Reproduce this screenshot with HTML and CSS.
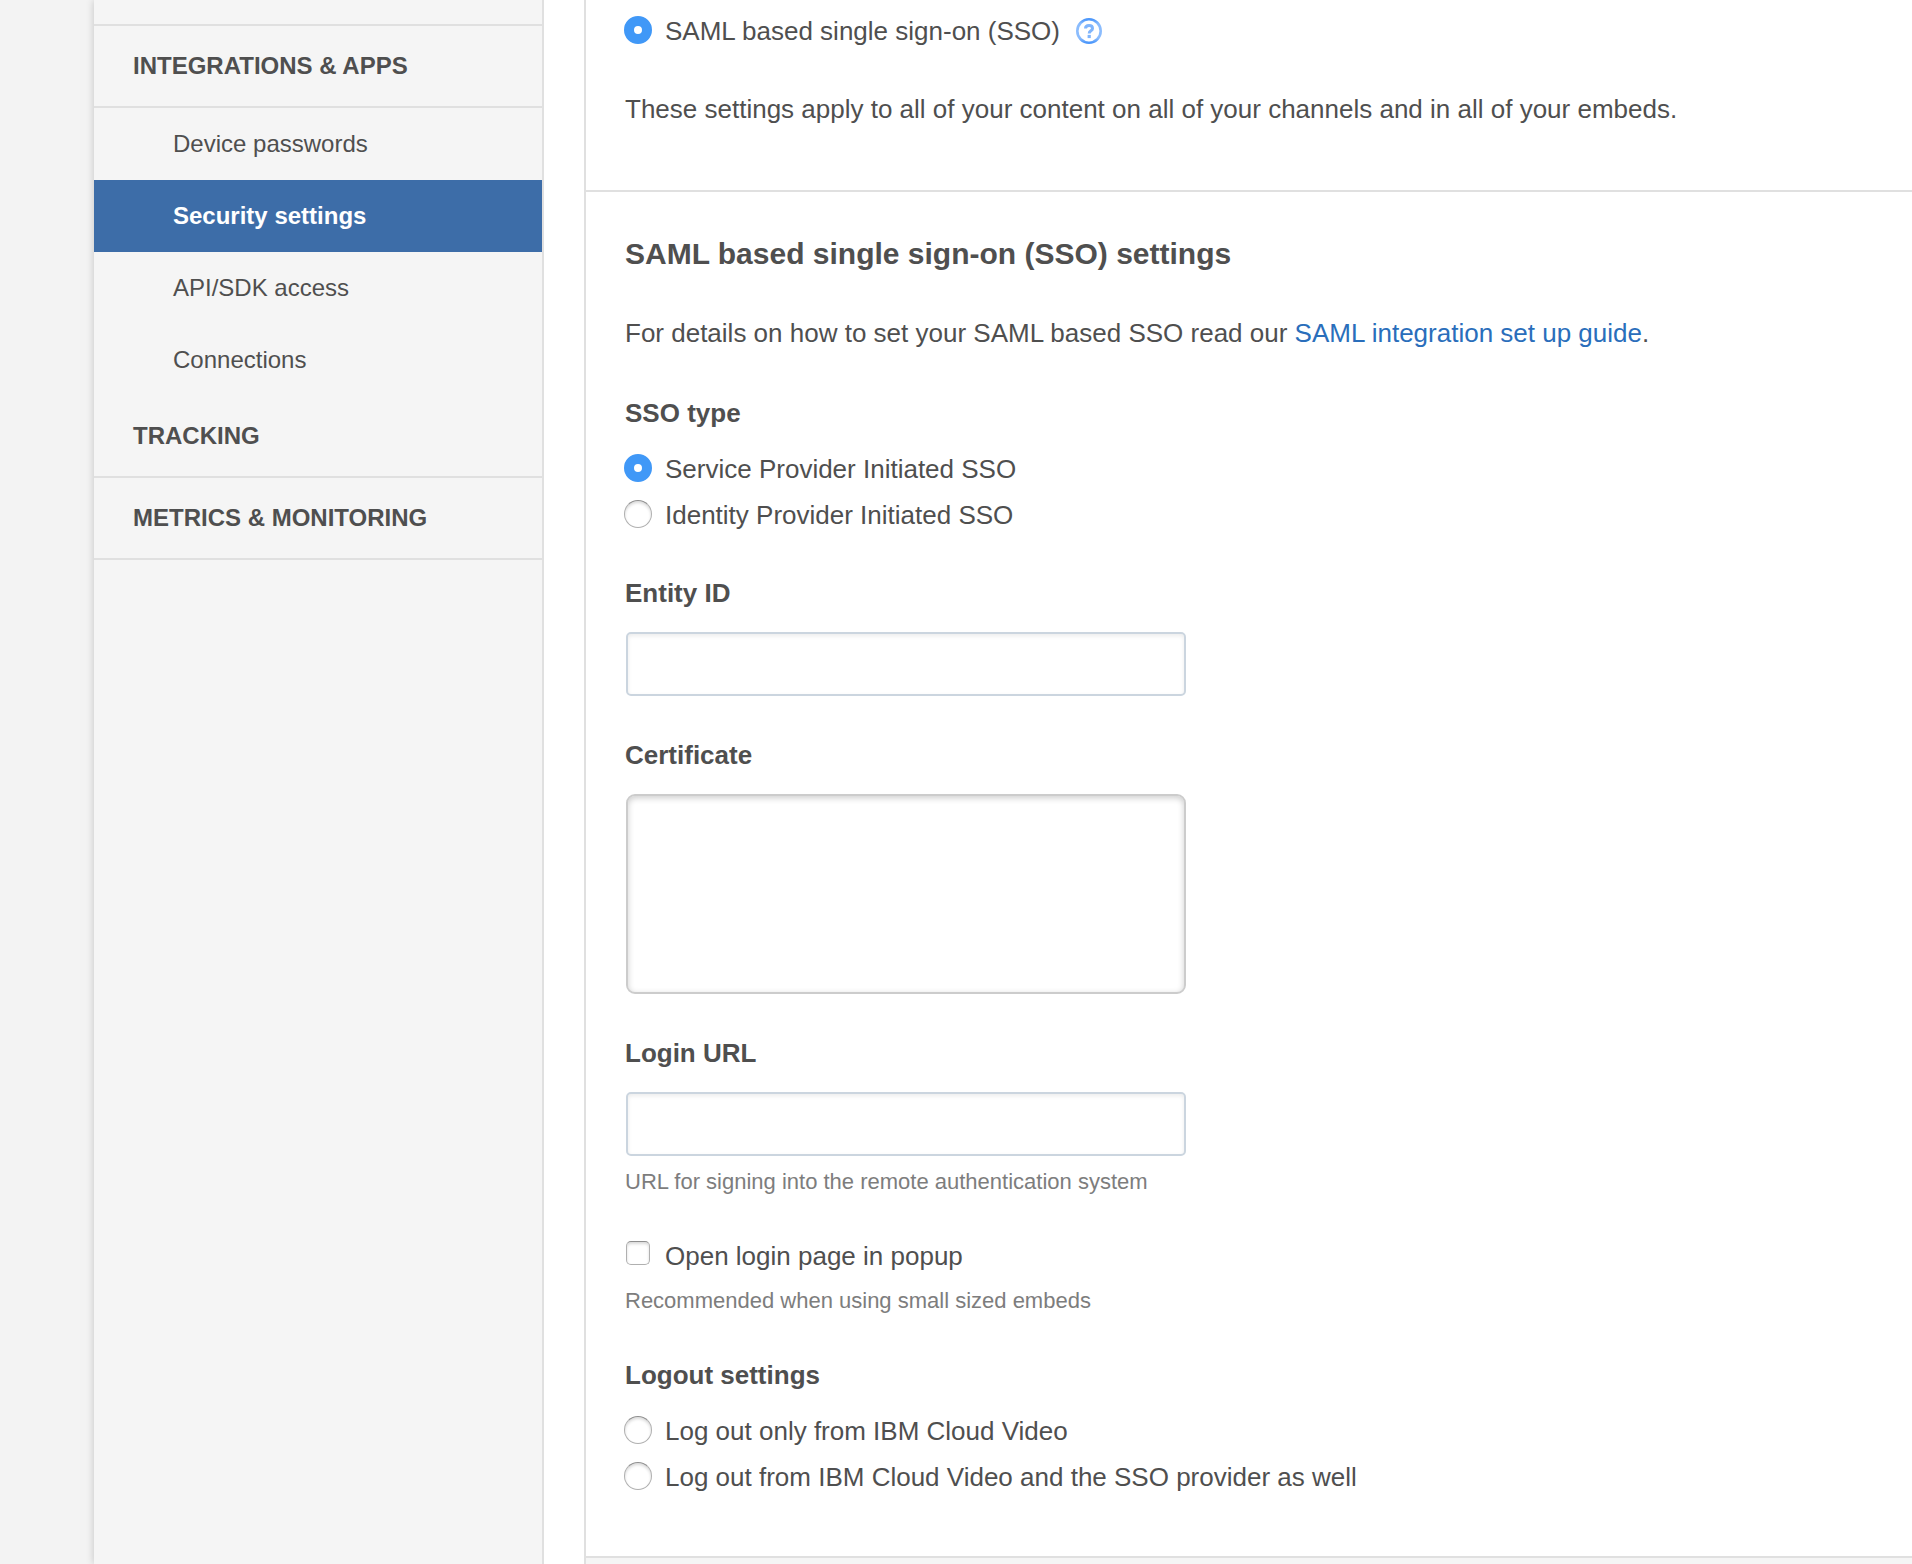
FILE: index.html
```html
<!DOCTYPE html>
<html lang="en">
<head>
    <meta charset="UTF-8">
    <meta name="viewport" content="width=device-width, initial-scale=1.0">
    <title>Security settings</title>
    <link rel="stylesheet" href="styles.css">
</head>
<body>
    <div class="page">
        <nav class="sidebar">
            <div class="menu-spacer"></div>
            <h2 class="menu-title">INTEGRATIONS &amp; APPS</h2>
            <ul class="menu">
                <li><a href="#">Device passwords</a></li>
                <li><a href="#" class="active">Security settings</a></li>
                <li><a href="#">API/SDK access</a></li>
                <li><a href="#">Connections</a></li>
            </ul>
            <h2 class="menu-title">TRACKING</h2>
            <h2 class="menu-title">METRICS &amp; MONITORING</h2>
        </nav>
        <main class="content">
            <form class="panel">
                <section class="section section-first">
                    <div class="option">
                        <input type="radio" id="authSaml" name="auth" checked>
                        <label for="authSaml">SAML based single sign-on (SSO)</label>
                        <a href="#" class="help" aria-label="Help">
                            <svg width="26" height="26" viewBox="0 0 26 26" fill="none">
                                <defs>
                                    <linearGradient id="ring" x1="0" y1="0" x2="0" y2="1">
                                        <stop offset="0" stop-color="#4c97fb"/>
                                        <stop offset="0.2" stop-color="#8bbcfd"/>
                                        <stop offset="0.8" stop-color="#8bbcfd"/>
                                        <stop offset="1" stop-color="#4c97fb"/>
                                    </linearGradient>
                                </defs>
                                <circle cx="13" cy="13" r="11.7" stroke="url(#ring)" stroke-width="2.6"/>
                                <path d="M9.5 10.6C9.5 8.4 11 7.5 13 7.5s3.5 1 3.5 2.9c0 2.5-3.3 2.3-3.3 5" stroke="#80b5fc" stroke-width="3"/>
                                <rect x="11.6" y="16.9" width="3.2" height="3.2" fill="#80b5fc"/>
                            </svg>
                        </a>
                    </div>
                    <p class="text">These settings apply to all of your content on all of your channels and in all of your embeds.</p>
                </section>
                <section class="section section-sso">
                    <h1>SAML based single sign-on (SSO) settings</h1>
                    <p class="text">For details on how to set your SAML based SSO read our <a href="#">SAML integration set up guide</a>.</p>

                    <fieldset class="group">
                        <legend class="title">SSO type</legend>
                        <div class="option">
                            <input type="radio" id="ssoSp" name="ssoType" checked>
                            <label for="ssoSp">Service Provider Initiated SSO</label>
                        </div>
                        <div class="option">
                            <input type="radio" id="ssoIdp" name="ssoType">
                            <label for="ssoIdp">Identity Provider Initiated SSO</label>
                        </div>
                    </fieldset>

                    <div class="group">
                        <label class="title" for="entityId">Entity ID</label>
                        <input type="text" class="field" id="entityId" name="entityId">
                    </div>

                    <div class="group">
                        <label class="title" for="certificate">Certificate</label>
                        <textarea class="field" id="certificate" name="certificate"></textarea>
                    </div>

                    <div class="group">
                        <label class="title" for="loginUrl">Login URL</label>
                        <input type="text" class="field" id="loginUrl" name="loginUrl">
                        <p class="hint">URL for signing into the remote authentication system</p>
                    </div>

                    <div class="group group-check">
                        <div class="option">
                            <input type="checkbox" id="popup" name="popup">
                            <label for="popup">Open login page in popup</label>
                        </div>
                        <p class="hint">Recommended when using small sized embeds</p>
                    </div>

                    <fieldset class="group">
                        <legend class="title">Logout settings</legend>
                        <div class="option">
                            <input type="radio" id="logoutIbm" name="logout">
                            <label for="logoutIbm">Log out only from IBM Cloud Video</label>
                        </div>
                        <div class="option">
                            <input type="radio" id="logoutAll" name="logout">
                            <label for="logoutAll">Log out from IBM Cloud Video and the SSO provider as well</label>
                        </div>
                    </fieldset>
                </section>
                <div class="panel-footer"></div>
            </form>
        </main>
    </div>
</body>
</html>
```
FILE: styles.css
```css
* {
    box-sizing: border-box;
}
body {
    margin: 0;
    background-color: #f3f3f3;
    color: #4f4f4f;
    font-family: "Helvetica Neue", Helvetica, "Liberation Sans", Arial, sans-serif;
    font-size: 26px;
    line-height: 36px;
}
h1, h2, p, ul {
    margin: 0;
    padding: 0;
}
a {
    color: #2a6ebb;
    text-decoration: none;
}
.page {
    display: flex;
    min-height: 100vh;
    margin-left: 94px;
    background-color: #fff;
    box-shadow: 0 0 8px rgba(0, 0, 0, 0.2);
}

/* sidebar */
.sidebar {
    flex: 0 0 450px;
    background-color: #f5f5f5;
    border-right: 2px solid #e0e0e0;
    font-size: 24px;
}
.menu-spacer {
    height: 26px;
    border-bottom: 2px solid #e0e0e0;
}
.menu-title {
    padding: 0 39px;
    border-bottom: 2px solid #e0e0e0;
    font-size: 24px;
    line-height: 80px;
}
.menu {
    list-style: none;
}
.menu a {
    display: block;
    padding: 0 79px;
    color: #4f4f4f;
    line-height: 72px;
}
.menu a.active {
    background-color: #3d6da8;
    color: #fff;
    font-weight: bold;
}

/* content */
.content {
    display: flex;
    flex: 1;
    padding-left: 40px;
}
.panel {
    display: flex;
    flex: 1;
    flex-direction: column;
    border-left: 2px solid #e0e0e0;
}
.section {
    padding: 0 39px;
    border-bottom: 2px solid #e0e0e0;
}
.section-first {
    padding-top: 8px;
    padding-bottom: 63px;
}
.section-first .text {
    margin-top: 37px;
}
.section-sso {
    padding-top: 44px;
    padding-bottom: 19px;
}
.panel-footer {
    flex: 1;
    background-color: #f5f5f5;
}
h1 {
    margin-bottom: 43px;
    font-size: 30px;
}
.group {
    margin: 0;
    padding: 0 0 37px;
    border: 0;
}
.group-check {
    padding-bottom: 42px;
}
.text + .group {
    margin-top: 44px;
}
.title {
    display: block;
    padding: 0;
    margin-bottom: 15px;
    font-weight: bold;
}
.option {
    display: flex;
    align-items: flex-start;
    margin-left: -1px;
    line-height: 46px;
}
.help {
    display: flex;
    margin: 10px 0 0 16px;
}

/* controls */
input[type="radio"],
input[type="checkbox"] {
    flex: none;
    appearance: none;
    width: 28px;
    height: 28px;
    margin: 8px 13px 0 0;
    border: 1px solid #b0b0b0;
    border-top-color: #8f8f8f;
    border-radius: 50%;
    background-color: #fff;
    box-shadow: inset 0 2px 3px rgba(0, 0, 0, 0.15);
}
input[type="radio"]:checked {
    border: 10px solid #4098f7;
    box-shadow: none;
}
input[type="checkbox"] {
    width: 24px;
    height: 24px;
    margin: 8px 15px 0 2px;
    border-radius: 5px;
}
.field {
    display: block;
    width: 560px;
    max-width: 100%;
    height: 64px;
    margin: 21px 0 4px 1px;
    padding: 0 16px;
    border: 2px solid #cbd5df;
    border-radius: 5px;
    background-color: #fff;
    box-shadow: inset 0 2px 4px rgba(0, 0, 0, 0.08);
    color: #4f4f4f;
    font: inherit;
}
textarea.field {
    height: 200px;
    padding: 12px 16px;
    border-color: #ccc;
    border-radius: 9px;
    box-shadow: inset 0 2px 6px rgba(0, 0, 0, 0.2);
    resize: none;
}
.hint {
    padding-top: 8px;
    color: #7d7d7d;
    font-size: 22px;
    line-height: 28px;
}
```
